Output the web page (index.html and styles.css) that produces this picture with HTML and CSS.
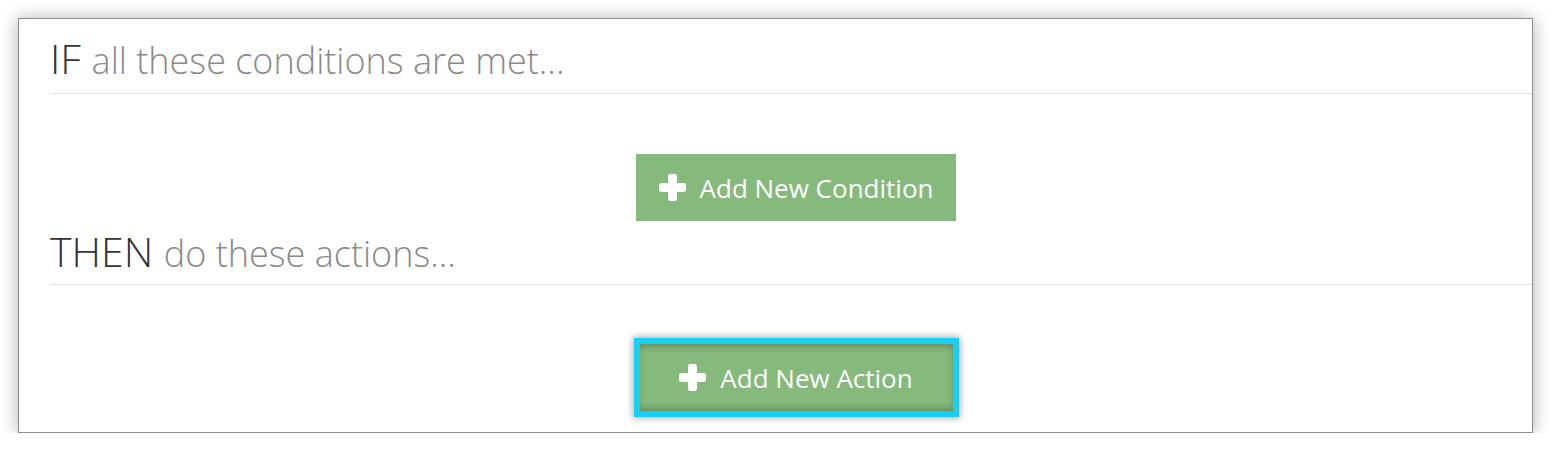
FILE: index.html
```html
<!DOCTYPE html>
<html>
<head>
<link rel="stylesheet" href="styles.css">
</head>
<body>

<!-- Rule editor -->
<div class="rule-panel">

  <h2 class="rule-head first">IF <span class="rule-sub">all these conditions are met...</span></h2>
  <div class="rule-actions first">
    <button class="add-btn" type="button">
      <svg class="plus" viewBox="0 0 26 26"><path d="M10.75 0h4.5a2 2 0 0 1 2 2v6.75H24a2 2 0 0 1 2 2v4.5a2 2 0 0 1-2 2h-6.75V24a2 2 0 0 1-2 2h-4.5a2 2 0 0 1-2-2v-6.75H2a2 2 0 0 1-2-2v-4.5a2 2 0 0 1 2-2h6.75V2a2 2 0 0 1 2-2z"/></svg>
      Add New Condition
    </button>
  </div>

  <h2 class="rule-head last">THEN <span class="rule-sub">do these actions...</span></h2>
  <div class="rule-actions last">
    <button class="add-btn focused" type="button">
      <svg class="plus" viewBox="0 0 26 26"><path d="M10.75 0h4.5a2 2 0 0 1 2 2v6.75H24a2 2 0 0 1 2 2v4.5a2 2 0 0 1-2 2h-6.75V24a2 2 0 0 1-2 2h-4.5a2 2 0 0 1-2-2v-6.75H2a2 2 0 0 1-2-2v-4.5a2 2 0 0 1 2-2h6.75V2a2 2 0 0 1 2-2z"/></svg>
      Add New Action
    </button>
  </div>

</div>

</body>
</html>
```

FILE: styles.css
```css
body {
    margin: 0;
    background-color: #fff;
    font-family: "Open Sans", "Liberation Sans", sans-serif;
}

/* The panel holding the rule */
.rule-panel {
    margin: 18px 19px 0 18px;
    padding: 0 0 21px 31px;
    border: 1px solid #8d8d8d;
    background-color: #fff;
    box-shadow: 0 1px 16px rgba(0,0,0,0.32);
}

/* IF / THEN headings */
.rule-head {
    margin: 0;
    padding: 0 0 5px 0;
    font-size: 41px;
    font-weight: 300;
    line-height: 57px;
    color: #333;
    border-bottom: 1px solid #e2e2e2;
}

.rule-head.first {
    margin-top: 11px;
    padding-bottom: 4px;
}

.rule-head.last {
    margin-top: 2px;
    padding-bottom: 2px;
}

.rule-sub {
    font-size: 36px;
    color: #8a8a8a;
}

/* Button rows */
.rule-actions {
    display: flex;
    justify-content: center;
    padding-left: 10px;
}

.rule-actions.first {
    padding-top: 60px;
}

.rule-actions.last {
    padding-top: 59px;
}

.add-btn {
    position: relative;
    display: flex;
    align-items: center;
    justify-content: center;
    gap: 14px;
    width: 320px;
    height: 67px;
    padding: 0;
    border: none;
    background-color: #86b97c;
    color: #fff;
    font-family: "Open Sans", "Liberation Sans", sans-serif;
    font-size: 26px;
    cursor: pointer;
}

.add-btn .plus {
    width: 27px;
    height: 27px;
    fill: #fff;
}

/* pressed button */
.add-btn.focused {
    box-shadow: inset 0 0 10px rgba(0,0,0,0.4);
}

/* the highlight box drawn round it */
.add-btn.focused::after {
    content: "";
    position: absolute;
    top: -6px;
    bottom: -6px;
    left: -2px;
    right: -3px;
    border: 6px solid #17cff6;
    box-shadow: 0 0 7px 1px rgba(0,0,0,0.35);
}
```
